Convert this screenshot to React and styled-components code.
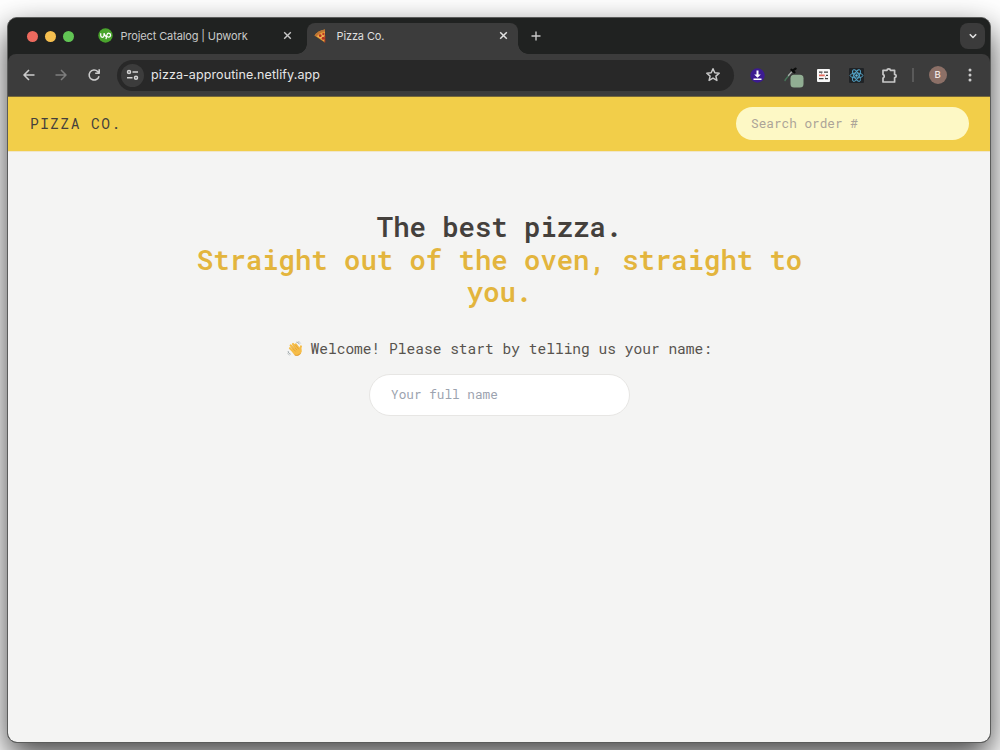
import React from "react";
import styled, { createGlobalStyle } from "styled-components";

const Global = createGlobalStyle`
  * { box-sizing: border-box; }
  html, body { margin: 0; width: 1000px; height: 750px; overflow: hidden; background: #fff; }
`;

const sans = `Inter, Roboto, "Liberation Sans", sans-serif`;
const mono = `"Roboto Mono", "DejaVu Sans Mono", "Liberation Mono", monospace`;

const Desktop = styled.div`
  width: 1000px;
  height: 750px;
  padding: 17px 9px 7px 7px;
  overflow: hidden;
`;

const Window = styled.div`
  width: 984px;
  height: 726px;
  border: 1px solid #5b5c5b;
  border-radius: 10px;
  background: #202221;
  overflow: hidden;
  display: flex;
  flex-direction: column;
  box-shadow: 0 13px 32px rgba(0, 0, 0, 0.74);
`;

const TabStrip = styled.div`
  height: 36px;
  flex: none;
  display: flex;
  align-items: flex-start;
  padding-left: 19px;
  background: #202221;
`;

const Lights = styled.div`
  display: flex;
  gap: 7.2px;
  padding-top: 12.5px;
  width: 71px;
`;

const Light = styled.span`
  width: 11px;
  height: 11px;
  border-radius: 50%;
  background: ${(p) => p.$color};
`;

const Tab = styled.div`
  position: relative;
  display: flex;
  align-items: center;
  height: 31px;
  margin-top: 5px;
  padding: ${(p) => (p.$active ? "0 10px 6px 7px" : "0 15px 6px 0")};
  width: ${(p) => p.$width}px;
  border-radius: 8px 8px 0 0;
  background: ${(p) => (p.$active ? "#3c3c3c" : "transparent")};
  color: ${(p) => (p.$active ? "#dfdfdf" : "#c9cac9")};
  font: 400 11px/14px ${sans};
  letter-spacing: -0.12px;
  svg { flex: none; display: block; }
  &::before, &::after {
    content: "";
    display: ${(p) => (p.$active ? "block" : "none")};
    position: absolute;
    bottom: 0;
    width: 10px;
    height: 10px;
  }
  &::before { left: -10px; background: radial-gradient(circle at 0 0, transparent 9.5px, #3c3c3c 10px); }
  &::after { right: -10px; background: radial-gradient(circle at 100% 0, transparent 9.5px, #3c3c3c 10px); }
`;

const TabTitle = styled.span`
  flex: 1;
  margin-left: ${(p) => p.$gap}px;
  white-space: nowrap;
`;

const NewTab = styled.div`
  padding: 13px 0 0 13px;
  flex: 1;
  svg { display: block; }
`;

const TabSearch = styled.div`
  display: grid;
  place-items: center;
  width: 25px;
  height: 26px;
  margin: 5px 5px 0 0;
  border-radius: 8px;
  background: #3b3b3b;
`;

const Toolbar = styled.div`
  height: 42px;
  flex: none;
  display: flex;
  align-items: center;
  padding-left: 13.5px;
  background: #3c3c3c;
  border-radius: 8px 8px 0 0;
  svg { display: block; flex: none; }
`;

const NavButtons = styled.div`
  display: flex;
  gap: 18.5px;
  width: 95.5px;
`;

const Address = styled.div`
  display: flex;
  align-items: center;
  width: 617px;
  height: 31px;
  padding: 0 13px 0 4px;
  border-radius: 16px;
  background: #282828;
`;

const SiteInfo = styled.span`
  display: grid;
  place-items: center;
  width: 23px;
  height: 23px;
  border-radius: 50%;
  background: #3c3c3c;
`;

const Url = styled.span`
  flex: 1;
  margin-left: 7px;
  color: #e6e6e6;
  font: 400 12.5px/18px ${sans};
  letter-spacing: 0.1px;
`;

const Extensions = styled.div`
  display: grid;
  grid-template-columns: repeat(5, 33px);
  place-items: center;
  margin-left: 7px;
`;

const Divider = styled.span`
  width: 2px;
  height: 14px;
  margin-left: 6px;
  background: #5a5a5a;
`;

const Avatar = styled.span`
  width: 18px;
  height: 18px;
  margin: 0 15.5px 0 14.5px;
  border-radius: 50%;
  background: #8c7067;
  color: #f2e8e4;
  text-align: center;
  font: 500 9.5px/18px ${sans};
`;

const Header = styled.header`
  height: 56px;
  flex: none;
  display: flex;
  align-items: center;
  justify-content: space-between;
  padding: 0 21px 0 22px;
  border-top: 1px solid #75673a;
  border-bottom: 1px solid #f0e6cb;
  background: #f2ce49;
`;

const Brand = styled.span`
  color: #44403c;
  font: 400 14.55px/20px ${mono};
  letter-spacing: 1.45px;
`;

const Field = styled.input`
  display: block;
  border: 0;
  outline: 0;
  border-radius: 999px;
  font: 400 12.73px/18px ${mono};
`;

const Search = styled(Field)`
  width: 233px;
  height: 33px;
  margin-top: -1px;
  padding: 0 15px 2px;
  background: #fdf8c5;
  &::placeholder { color: #aca498; opacity: 1; }
`;

const Main = styled.main`
  flex: 1;
  background: #f4f4f3;
  display: flex;
  flex-direction: column;
  align-items: center;
  padding: 58px 0 0 1px;
`;

const Title = styled.h1`
  margin: 0;
  width: 640px;
  color: #44403c;
  text-align: center;
  font: 600 27.27px/32.73px ${mono};
  span { color: #e3b53d; }
`;

const Welcome = styled.p`
  display: flex;
  align-items: center;
  gap: 7.5px;
  margin: 29.8px 0 0;
  color: #57534e;
  font: 400 14.55px/22px ${mono};
`;

const NameField = styled(Field)`
  width: 261px;
  height: 42px;
  margin-top: 14px;
  padding: 0 21px 2px;
  border: 1px solid #e7e6e4;
  background: #fff;
  &::placeholder { color: #9ca3af; opacity: 1; }
`;

const Stroke = ({ size = 12, color = "#c8c8c8", w = 1.5, d, h }) => (
  <svg width={size} height={h || size} viewBox={`0 0 ${size} ${h || size}`} fill="none" stroke={color} strokeWidth={w} strokeLinejoin="round">
    <path d={d} />
  </svg>
);

const Upwork = () => (
  <svg width="15" height="15" viewBox="0 0 15 15" fill="none">
    <circle cx="7.5" cy="7.5" r="7.2" fill="#4aa52d" />
    <path d="M2.7 5.2v2.4c0 2.2 3.3 2.2 3.3 0V5.2c.5 1.500 1.300 3 2.500 3.900M8 11.200l.9-4.300c.7-2.600 4-1.900 3.700.4-.3 2.200-2.800 2.200-4 .9" stroke="#fff" strokeWidth="1.25" />
  </svg>
);

const Pizza = () => (
  <svg width="13" height="14" viewBox="0 0 13 14">
    <path d="M.5 6.600Q4 1.700 11 .6L10.900 13.400Z" fill="#e0922f" />
    <path d="M.5 6.600Q4 1.600 11 .6v2Q6 3.300 2.400 7.600Z" fill="#bd7434" />
    <path d="M3 7.200Q6 4 10.700 3.200l-.1 9Z" fill="#efb352" />
    <circle cx="6.200" cy="6.700" r="1.400" fill="#b92f20" />
    <circle cx="9.400" cy="5" r="1.200" fill="#c23a24" />
    <circle cx="9.200" cy="9.300" r="1.500" fill="#b92f20" />
    <path d="M10.900 6.500v7" stroke="#a73420" strokeWidth="1" />
  </svg>
);

const Wave = () => (
  <svg width="16" height="16" viewBox="0 0 16 16" fill="none" strokeLinecap="round">
    <g stroke="#f6bd48" strokeWidth="2.2">
      <path d="M3 7.200l5 5M3.700 4.500l6 6M6 3l5.500 6.200M8.800 3.300l3.700 5" />
      <path d="M13.400 10.500c0-2.300-.3-3.800.5-5" />
    </g>
    <path d="M3.800 8.500L11.500 5.700l2.700 2.400c.8 2.700 0 4.700-1.700 6-2 1.300-4 .8-5.500-.7Z" fill="#f6bd48" />
    <path d="M4.900 6.600l3.500 3.600M6.200 4.800l3.600 4M8.700 4.300l2.900 3.700" stroke="#d28e2c" strokeWidth=".5" />
    <path d="M8 14.200c2 .8 4.100 0 5.200-1.600" stroke="#dc932d" strokeWidth=".8" />
    <path d="M9.800 1.200c1.100.1 1.900.7 2.400 1.700M1.200 10.600c.2 1.200.9 2 2 2.400" stroke="#7e8a91" strokeWidth=".8" />
    <path d="M11.500.6c.9.2 1.600.7 2 1.500M.7 12.300c.2.900.8 1.600 1.600 1.900" stroke="#aab2b6" strokeWidth=".6" />
  </svg>
);

const DownloadExt = () => (
  <svg width="15" height="15" viewBox="0 0 15 15">
    <circle cx="7.500" cy="7.500" r="7.200" fill="#3c1b91" />
    <path d="M6.500 2.500h2v4h2.300L7.500 9.800 4.200 6.500h2.300ZM3.500 10.500h8v1.500h-8Z" fill="#fff" />
  </svg>
);

const PickerExt = () => (
  <svg width="26" height="26" viewBox="-6 -4 26 26" fill="none" strokeLinecap="round">
    <path d="M1 14.500c.5-2 3-3.300 4-5.600" stroke="#47765a" strokeWidth="1.400" />
    <path d="M4.500 9.500l4-4.500" stroke="#a5aaa7" strokeWidth="1.300" />
    <path d="M7.500 3.800l3 2.500M8.800 4.600L11.600 2.600" stroke="#0b0c0b" strokeWidth="2.300" />
    <rect x="6.500" y="8.800" width="13" height="12.800" rx="3.500" fill="#91ae93" />
  </svg>
);

const WallExt = () => (
  <svg width="13" height="13" viewBox="0 0 13 13">
    <rect width="13" height="13" rx="1" fill="#f8f8f8" />
    <path d="M2 2.500h3.500v1.300H2ZM7 2.500h4v1.300H7ZM2 9h4.500v1.300H2ZM8 9h3v1.300H8ZM9 5.700h2v1.400H9Z" fill="#3e3e3e" />
    <path d="M4 4.300h1v1H4ZM8 7.600h1v1H8Z" fill="#8a8a8a" />
    <path d="M2 5.600h5.700v1.600H2Z" fill="#e36a5c" />
  </svg>
);

const ReactExt = () => (
  <svg width="15" height="15" viewBox="0 0 15 15" fill="none" stroke="#55a9cf" strokeWidth=".9">
    <rect width="15" height="15" rx="1" fill="#202326" stroke="none" />
    {[30, 90, 150].map((a) => (
      <ellipse key={a} cx="7.500" cy="7.500" rx="6.400" ry="2.500" transform={`rotate(${a - 30} 7.500 7.500)`} />
    ))}
    <circle cx="7.500" cy="7.500" r="1.200" fill="#61b9df" stroke="none" />
  </svg>
);

const Puzzle = () => (
  <svg width="17" height="17" viewBox="0 0 17 17" fill="none">
    <path d="M2 3.300h4a1.700 1.500 0 0 1 3.400 0h4.200v4.200a1.600 1.600 0 0 1 0 3.200v4.300H2v-3.900a2 2 0 0 0 0-3.700Z" stroke="#c9c9c9" strokeWidth="1.700" strokeLinejoin="round" />
  </svg>
);

const Tune = () => (
  <svg width="13" height="12" viewBox="0 0 13 12" fill="none" stroke="#d3d3d3" strokeWidth="1.500">
    <circle cx="3" cy="3" r="1.500" />
    <path d="M6.500 3H12M1 8.800h5.500" />
    <circle cx="10" cy="8.800" r="1.500" />
  </svg>
);

export default function App() {
  const cross = "M1.200 1.200l6.600 6.600M7.800 1.200l-6.600 6.600";
  return (
    <Desktop>
      <Global />
      <Window>
        <TabStrip>
          <Lights>
            <Light $color="#ed6a5e" />
            <Light $color="#f5bf4f" />
            <Light $color="#61c554" />
          </Lights>
          <Tab $width={209}>
            <Upwork />
            <TabTitle $gap={7.5}>Project Catalog | Upwork</TabTitle>
            <Stroke size={9} d={cross} w={1.4} />
          </Tab>
          <Tab $width={211} $active>
            <Pizza />
            <TabTitle $gap={9.5}>Pizza Co.</TabTitle>
            <Stroke size={9} d={cross} color="#e1e1e1" w={1.5} />
          </Tab>
          <NewTab>
            <Stroke size={10} d="M5 .5v9M.5 5h9" w={1.4} />
          </NewTab>
          <TabSearch>
            <Stroke size={8} h={6} d="M.8 1.300L4 4.500l3.200-3.200" color="#e0e0e0" w={1.6} />
          </TabSearch>
        </TabStrip>
        <Toolbar>
          <NavButtons>
            <Stroke size={14} d="M12.500 7H2M7 2L2 7l5 5" color="#cbcbcb" w={1.6} />
            <Stroke size={14} d="M1.500 7H12M7 2l5 5-5 5" color="#7d7d7d" />
            <Stroke size={14} d="M12 8.200A5 5 0 1 1 10.700 3.500L12 4.800M12.200 1.300v4H8.200" color="#cbcbcb" w={1.6} />
          </NavButtons>
          <Address>
            <SiteInfo><Tune /></SiteInfo>
            <Url>pizza-approutine.netlify.app</Url>
            <Stroke size={16} d="M8 1.800l1.800 4 4.400.4-3.300 2.900 1 4.300L8 11.100l-3.900 2.300 1-4.300-3.300-2.900 4.400-.4Z" />
          </Address>
          <Extensions>
            <DownloadExt />
            <PickerExt />
            <WallExt />
            <ReactExt />
            <Puzzle />
          </Extensions>
          <Divider />
          <Avatar>B</Avatar>
          <svg width="16" height="16" viewBox="0 0 16 16" fill="#cbcbcb">
            <circle cx="8" cy="3" r="1.500" />
            <circle cx="8" cy="8" r="1.500" />
            <circle cx="8" cy="13" r="1.500" />
          </svg>
        </Toolbar>
        <Header>
          <Brand>PIZZA CO.</Brand>
          <Search placeholder="Search order #" />
        </Header>
        <Main>
          <Title>
            The best pizza.
            <br />
            <span>Straight out of the oven, straight to you.</span>
          </Title>
          <Welcome>
            <Wave />
            Welcome! Please start by telling us your name:
          </Welcome>
          <NameField placeholder="Your full name" />
        </Main>
      </Window>
    </Desktop>
  );
}
